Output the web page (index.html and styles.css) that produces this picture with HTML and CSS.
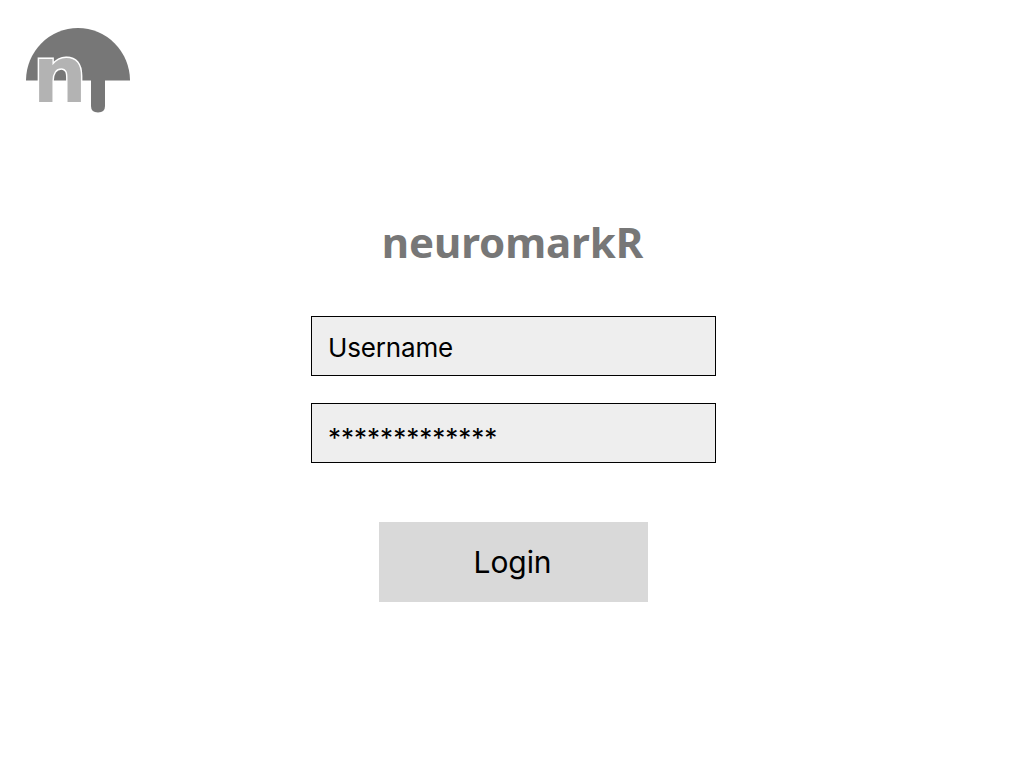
FILE: index.html
```html
<!DOCTYPE html>
<html lang="en">
<head>
  <meta charset="UTF-8" />
  <meta name="viewport" content="width=device-width, initial-scale=1.0" />
  <title>neuromarkR</title>
  <link rel="stylesheet" href="styles.css">
</head>
<body>
  <header class="header">
    <svg class="logo" viewBox="0 0 106 88" role="img" aria-label="neuromarkR logo">
      <path class="logo-cap" d="M1 53.5 A52 52.5 0 0 1 105 53.5 Z" />
      <path class="logo-stem" d="M66 53 H80 V79 Q80 85.5 73 85.5 Q66 85.5 66 79 Z" />
      <text class="logo-letter" transform="translate(7.7 75.3) scale(0.95 0.98)">n</text>
    </svg>
  </header>
  <main class="login">
    <h1>neuromarkR</h1>
    <form>
      <input class="field" type="text" value="Username" aria-label="Username">
      <input class="field field-password" type="text" value="*************" aria-label="Password">
      <button class="login-btn" type="button">Login</button>
    </form>
  </main>
</body>
</html>
```

FILE: styles.css
```css
* {
  box-sizing: border-box;
}
body {
  margin: 0;
  background-color: #fff;
  font-family: Inter, "Liberation Sans", sans-serif;
}
.header {
  height: 212px;
  padding: 27px 25px;
}
.logo {
  display: block;
  width: 106px;
  height: 88px;
  overflow: visible;
}
.logo-cap,
.logo-stem {
  fill: #777;
}
.logo-letter {
  font-family: "DejaVu Sans", sans-serif;
  font-size: 80px;
  font-weight: bold;
  fill: #b3b3b3;
  stroke: #fff;
  stroke-width: 3px;
  paint-order: stroke;
}
.login {
  width: 405px;
  margin-left: 311px;
}
h1 {
  margin: 0 0 44px;
  padding-right: 2px;
  font-family: "Noto Sans", "Open Sans", sans-serif;
  font-size: 42px;
  font-weight: bold;
  line-height: 60px;
  letter-spacing: -0.1px;
  text-align: center;
  color: #777;
}
form {
  display: flex;
  flex-direction: column;
  align-items: center;
}
.field {
  width: 405px;
  height: 60px;
  margin: 0 0 27px;
  padding: 2px 16px 0;
  border: 1px solid #000;
  border-radius: 0;
  background-color: #eee;
  font-family: inherit;
  font-size: 26px;
  letter-spacing: -0.15px;
  color: #000;
}
.field-password {
  padding-top: 8px;
  letter-spacing: 0;
}
.login-btn {
  width: 269px;
  height: 80px;
  margin-top: 32px;
  padding: 0 2px 0 0;
  border: none;
  background-color: #d9d9d9;
  font-family: inherit;
  font-size: 30px;
  letter-spacing: -0.1px;
  color: #000;
  cursor: pointer;
}
```
